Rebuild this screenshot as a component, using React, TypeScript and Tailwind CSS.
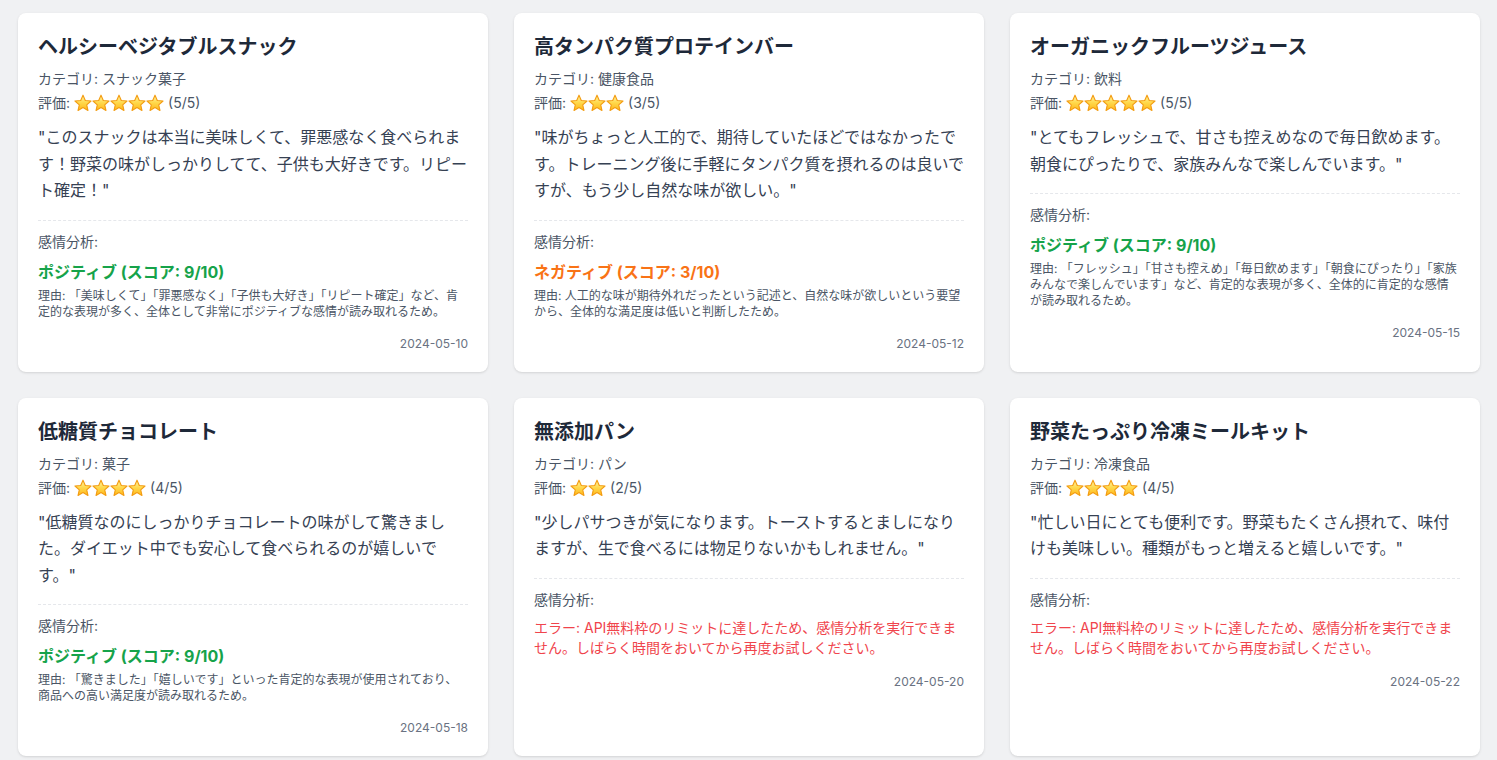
import React from 'react'

type Sentiment =
  | { kind: 'positive' | 'negative'; score: number; reason: string }
  | { kind: 'error'; message: string }

interface Review {
  name: string
  category: string
  rating: number
  text: string
  sentiment: Sentiment
  date: string
}

const reviews: Review[] = [
  {
    name: 'ヘルシーベジタブルスナック',
    category: 'スナック菓子',
    rating: 5,
    text: 'このスナックは本当に美味しくて、罪悪感なく食べられます！野菜の味がしっかりしてて、子供も大好きです。リピート確定！',
    sentiment: {
      kind: 'positive',
      score: 9,
      reason:
        '理由: 「美味しくて」「罪悪感なく」「子供も大好き」「リピート確定」など、肯定的な表現が多く、全体として非常にポジティブな感情が読み取れるため。',
    },
    date: '2024-05-10',
  },
  {
    name: '高タンパク質プロテインバー',
    category: '健康食品',
    rating: 3,
    text: '味がちょっと人工的で、期待していたほどではなかったです。トレーニング後に手軽にタンパク質を摂れるのは良いですが、もう少し自然な味が欲しい。',
    sentiment: {
      kind: 'negative',
      score: 3,
      reason:
        '理由: 人工的な味が期待外れだったという記述と、自然な味が欲しいという要望から、全体的な満足度は低いと判断したため。',
    },
    date: '2024-05-12',
  },
  {
    name: 'オーガニックフルーツジュース',
    category: '飲料',
    rating: 5,
    text: 'とてもフレッシュで、甘さも控えめなので毎日飲めます。朝食にぴったりで、家族みんなで楽しんでいます。',
    sentiment: {
      kind: 'positive',
      score: 9,
      reason:
        '理由: 「フレッシュ」「甘さも控えめ」「毎日飲めます」「朝食にぴったり」「家族みんなで楽しんでいます」など、肯定的な表現が多く、全体的に肯定的な感情が読み取れるため。',
    },
    date: '2024-05-15',
  },
  {
    name: '低糖質チョコレート',
    category: '菓子',
    rating: 4,
    text: '低糖質なのにしっかりチョコレートの味がして驚きました。ダイエット中でも安心して食べられるのが嬉しいです。',
    sentiment: {
      kind: 'positive',
      score: 9,
      reason:
        '理由: 「驚きました」「嬉しいです」といった肯定的な表現が使用されており、商品への高い満足度が読み取れるため。',
    },
    date: '2024-05-18',
  },
  {
    name: '無添加パン',
    category: 'パン',
    rating: 2,
    text: '少しパサつきが気になります。トーストするとましになりますが、生で食べるには物足りないかもしれません。',
    sentiment: {
      kind: 'error',
      message:
        'エラー: API無料枠のリミットに達したため、感情分析を実行できません。しばらく時間をおいてから再度お試しください。',
    },
    date: '2024-05-20',
  },
  {
    name: '野菜たっぷり冷凍ミールキット',
    category: '冷凍食品',
    rating: 4,
    text: '忙しい日にとても便利です。野菜もたくさん摂れて、味付けも美味しい。種類がもっと増えると嬉しいです。',
    sentiment: {
      kind: 'error',
      message:
        'エラー: API無料枠のリミットに達したため、感情分析を実行できません。しばらく時間をおいてから再度お試しください。',
    },
    date: '2024-05-22',
  },
]

// emoji-like star, drawn since there is no colour emoji font
function Star() {
  return (
    <svg width="18" height="18" viewBox="0 0 24 24" className="shrink-0">
      <defs>
        <linearGradient id="starFill" x1="0" y1="0" x2="0" y2="1">
          <stop offset="0%" stopColor="#fff6a8" />
          <stop offset="50%" stopColor="#ffd84a" />
          <stop offset="100%" stopColor="#ffb81c" />
        </linearGradient>
      </defs>
      <path
        d="M12 1.6L15.06 8.59L22.7 9.3L16.95 14.41L18.6 21.9L12 18L5.4 21.9L7.05 14.41L1.3 9.3L8.94 8.59Z"
        fill="url(#starFill)"
        stroke="#f39c12"
        strokeWidth="1.5"
        strokeLinejoin="round"
      />
    </svg>
  )
}

function ReviewCard({ review }: { review: Review }) {
  const s = review.sentiment
  return (
    <div className="rounded-lg bg-white p-5 shadow-sm">
      <h3 className="mt-[2px] text-xl font-bold leading-6 text-gray-800">{review.name}</h3>
      <p className="mt-[10px] text-sm leading-5 text-gray-600">カテゴリ: {review.category}</p>
      <p className="mt-1 flex items-center text-sm leading-5 text-gray-600">
        <span>評価:</span>
        <span className="ml-[4px] flex">
          {Array.from({ length: review.rating }).map((_, i) => (
            <Star key={i} />
          ))}
        </span>
        <span className="ml-1">({review.rating}/5)</span>
      </p>
      <p className="mt-[11px] text-base leading-[26.5px] text-gray-700">"{review.text}"</p>
      <div className="mt-4 border-t border-dashed border-gray-200 pt-[11px]">
        <p className="text-sm leading-5 text-gray-600">感情分析:</p>
        {s.kind === 'error' ? (
          <p className="mt-2 text-sm leading-5 text-[#f0444c]">{s.message}</p>
        ) : (
          <>
            <p
              className={
                s.kind === 'positive'
                  ? 'mt-2 text-base font-bold leading-6 text-[#16a34a]'
                  : 'mt-2 text-base font-bold leading-6 text-[#f97316]'
              }
            >
              {s.kind === 'positive' ? 'ポジティブ' : 'ネガティブ'} (スコア: {s.score}/10)
            </p>
            <p className="mt-1 text-xs leading-4 text-gray-600">{s.reason}</p>
          </>
        )}
      </div>
      <p className="mt-4 text-right text-xs leading-4 text-gray-500">{review.date}</p>
    </div>
  )
}

export default function App() {
  return (
    <div className="min-h-screen bg-[#f0f1f3] pl-[18px] pr-[17px] pt-[13px] pb-6 font-['Inter','Noto_Sans_CJK_JP',sans-serif]">
      <div className="grid grid-cols-3 gap-[26px]">
        {reviews.map((r) => (
          <ReviewCard key={r.name} review={r} />
        ))}
      </div>
    </div>
  )
}
